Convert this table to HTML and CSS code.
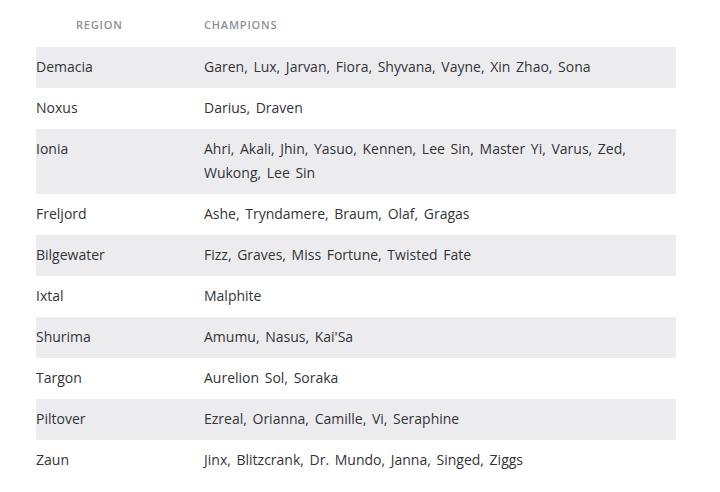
FILE: index.html
```html
<!DOCTYPE html>
<html>
<head>
<meta charset="utf-8">
<link rel="stylesheet" href="styles.css">
</head>
<body>
<table class="regions">
  <thead>
    <tr><th class="col-region">Region</th><th class="col-champs">Champions</th></tr>
  </thead>
  <tbody>
    <tr><td>Demacia</td><td>Garen, Lux, Jarvan, Fiora, Shyvana, Vayne, Xin Zhao, Sona</td></tr>
    <tr><td>Noxus</td><td>Darius, Draven</td></tr>
    <tr><td>Ionia</td><td>Ahri, Akali, Jhin, Yasuo, Kennen, Lee Sin, Master Yi, Varus, Zed,<br>Wukong, Lee Sin</td></tr>
    <tr><td>Freljord</td><td>Ashe, Tryndamere, Braum, Olaf, Gragas</td></tr>
    <tr><td>Bilgewater</td><td>Fizz, Graves, Miss Fortune, Twisted Fate</td></tr>
    <tr><td>Ixtal</td><td>Malphite</td></tr>
    <tr><td>Shurima</td><td>Amumu, Nasus, Kai'Sa</td></tr>
    <tr><td>Targon</td><td>Aurelion Sol, Soraka</td></tr>
    <tr><td>Piltover</td><td>Ezreal, Orianna, Camille, Vi, Seraphine</td></tr>
    <tr><td>Zaun</td><td>Jinx, Blitzcrank, Dr. Mundo, Janna, Singed, Ziggs</td></tr>
  </tbody>
</table>
</body>
</html>
```
FILE: styles.css
```css
html, body {
  margin: 0;
  background: #ffffff;
}
body {
  padding: 0 44px 0 36px;
  font-family: "Open Sans", "Liberation Sans", sans-serif;
  color: #333438;
}
.regions {
  width: 640px;
  border-collapse: collapse;
  font-size: 14px;
}
.regions th {
  text-align: left;
  font-size: 11px;
  font-weight: 600;
  letter-spacing: 0.8px;
  text-transform: uppercase;
  color: #8e9199;
  padding: 17px 0 14px 0;
  line-height: 16px;
}
.regions th.col-region {
  width: 128px;
  padding-left: 40px;
}
.regions td {
  padding: 8px 0 9px 0;
  line-height: 24px;
  vertical-align: top;
  word-spacing: 2px;
}
.regions tbody tr:nth-child(odd) td {
  background: #ececee;
}
```
